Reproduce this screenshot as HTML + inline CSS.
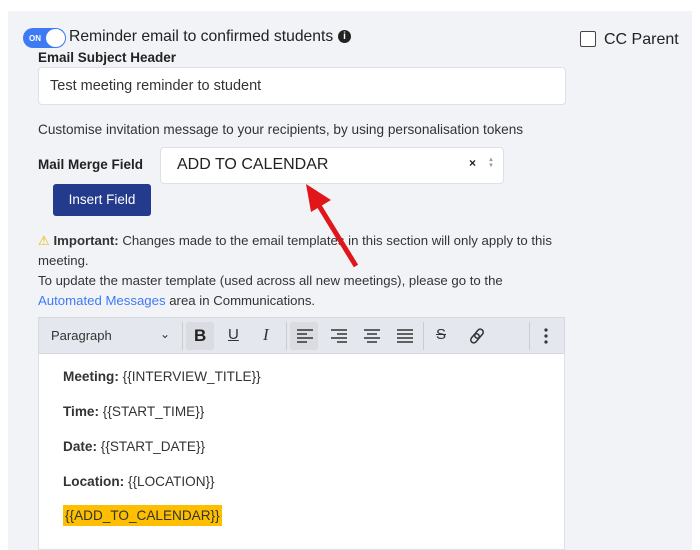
<!DOCTYPE html><html><head><style>
body{margin:0;width:700px;height:550px;background:#fff;font-family:"Liberation Sans",sans-serif;color:#222;position:relative;overflow:hidden}
.a{position:absolute}
.panel{left:8px;top:11px;width:684px;height:539px;background:#f2f3f7}
.t{font-size:13.6px;color:#333}
.box{background:#fff;border:1px solid #dde0e6;border-radius:4px;box-sizing:border-box}
.tb svg{position:absolute}
</style></head><body>
<div class="a panel"></div>
<div class="a" style="left:23px;top:28px;width:43px;height:20px;border-radius:10px;background:#3d7bf5"></div>
<div class="a" style="left:29px;top:34px;font-size:8px;font-weight:bold;color:#fff">ON</div>
<div class="a" style="left:46px;top:29px;width:19px;height:18px;border-radius:50%;background:#fff"></div>
<div class="a" style="left:69px;top:28px;font-size:15.7px;color:#222">Reminder email to confirmed students</div>
<div class="a" style="left:338px;top:30px;width:13px;height:13px;border-radius:50%;background:#222;color:#fff;font-size:10px;font-weight:bold;text-align:center;line-height:13px">i</div>
<div class="a" style="left:580px;top:31px;width:14px;height:14px;border:1.5px solid #444;border-radius:2px;background:#fff"></div>
<div class="a" style="left:604px;top:31px;font-size:16px;color:#222">CC Parent</div>
<div class="a" style="left:38px;top:50px;font-size:13.5px;font-weight:bold">Email Subject Header</div>
<div class="a box" style="left:38px;top:67px;width:528px;height:38px"></div>
<div class="a" style="left:50px;top:78px;font-size:14.5px;color:#333">Test meeting reminder to student</div>
<div class="a t" style="left:38px;top:122px">Customise invitation message to your recipients, by using personalisation tokens</div>
<div class="a" style="left:38px;top:157px;font-size:13.5px;font-weight:bold">Mail Merge Field</div>
<div class="a box" style="left:160px;top:147px;width:344px;height:37px"></div>
<div class="a" style="left:177px;top:156px;font-size:16px;color:#222">ADD TO CALENDAR</div>
<div class="a" style="left:469px;top:156px;font-size:12px;font-weight:bold">×</div>
<div class="a" style="left:488px;top:157px;font-size:6px;color:#999;line-height:6px">▲<br>▼</div>
<div class="a" style="left:53px;top:184px;width:98px;height:32px;background:#233a8d;border-radius:3px;color:#fff;font-size:13.5px;text-align:center;line-height:32px">Insert Field</div>
<div class="a t" style="left:38px;top:231px;line-height:20px;width:522px;font-size:13.2px">
<span style="color:#f0b400">⚠</span> <b>Important:</b> Changes made to the email templates in this section will only apply to this meeting.<br>To update the master template (used across all new meetings), please go to the <span style="color:#3d7bf5">Automated Messages</span> area in Communications.</div>
<div class="a" style="left:38px;top:317px;width:527px;height:233px;background:#fff;border:1px solid #dde0e6;box-sizing:border-box"></div>
<div class="a tb" style="left:38px;top:317px;width:527px;height:37px;background:#e4e7ee;border:1px solid #d6d9e0;box-sizing:border-box">
<div class="a" style="left:12px;top:10px;font-size:13px;color:#333">Paragraph</div>
<div class="a" style="left:121px;top:9px;font-size:12px;color:#333">⌄</div>
<div class="a" style="left:143px;top:4px;width:1px;height:28px;background:#ccc"></div>
<div class="a" style="left:147px;top:4px;width:28px;height:28px;background:#dadce2;border-radius:3px"></div>
<div class="a" style="left:155px;top:8px;font-size:17px;font-weight:bold;color:#222">B</div>
<div class="a" style="left:189px;top:8px;font-size:15px;text-decoration:underline;color:#333">U</div>
<div class="a" style="left:224px;top:7px;font-size:17px;font-style:italic;font-family:'Liberation Serif',serif;color:#333">I</div>
<div class="a" style="left:247px;top:4px;width:1px;height:28px;background:#ccc"></div>
<div class="a" style="left:251px;top:4px;width:28px;height:28px;background:#dadce2;border-radius:3px"></div>
<svg style="left:258px;top:11px" width="16" height="14" stroke="#333" stroke-width="1.5"><path d="M0 1h16M0 5h10M0 9h16M0 13h10"/></svg>
<svg style="left:292px;top:11px" width="16" height="14" stroke="#333" stroke-width="1.5"><path d="M0 1h16M6 5h10M0 9h16M6 13h10"/></svg>
<svg style="left:325px;top:11px" width="16" height="14" stroke="#333" stroke-width="1.5"><path d="M0 1h16M3 5h10M0 9h16M3 13h10"/></svg>
<svg style="left:358px;top:11px" width="16" height="14" stroke="#333" stroke-width="1.5"><path d="M0 1h16M0 5h16M0 9h16M0 13h16"/></svg>
<div class="a" style="left:384px;top:4px;width:1px;height:28px;background:#ccc"></div>
<div class="a" style="left:397px;top:8px;font-size:15px;text-decoration:line-through;color:#333">S</div>
<svg style="left:430px;top:10px" width="16" height="16" fill="none" stroke="#333" stroke-width="1.5"><rect x="5" y="0" width="6" height="10" rx="3" transform="rotate(40 8 8)"/><rect x="5" y="6" width="6" height="10" rx="3" transform="rotate(40 8 8)"/></svg>
<div class="a" style="left:490px;top:4px;width:1px;height:28px;background:#ccc"></div>
<svg style="left:505px;top:10px" width="4" height="16" fill="#333"><circle cx="2" cy="2" r="1.6"/><circle cx="2" cy="8" r="1.6"/><circle cx="2" cy="14" r="1.6"/></svg>
</div>
<div class="a t" style="left:63px;top:369px"><b>Meeting:</b> {{INTERVIEW_TITLE}}</div>
<div class="a t" style="left:63px;top:404px"><b>Time:</b> {{START_TIME}}</div>
<div class="a t" style="left:63px;top:439px"><b>Date:</b> {{START_DATE}}</div>
<div class="a t" style="left:63px;top:474px"><b>Location:</b> {{LOCATION}}</div>
<div class="a t" style="left:63px;top:505px;background:#fdbf00;padding:3px 2px;color:#333">{{ADD_TO_CALENDAR}}</div>
<svg class="a" style="left:0;top:0" width="700" height="550"><path d="M356 266L318 204" stroke="#e0161a" stroke-width="5"/><polygon points="306,184 331,200 311,212" fill="#e0161a"/></svg>
</body></html>
